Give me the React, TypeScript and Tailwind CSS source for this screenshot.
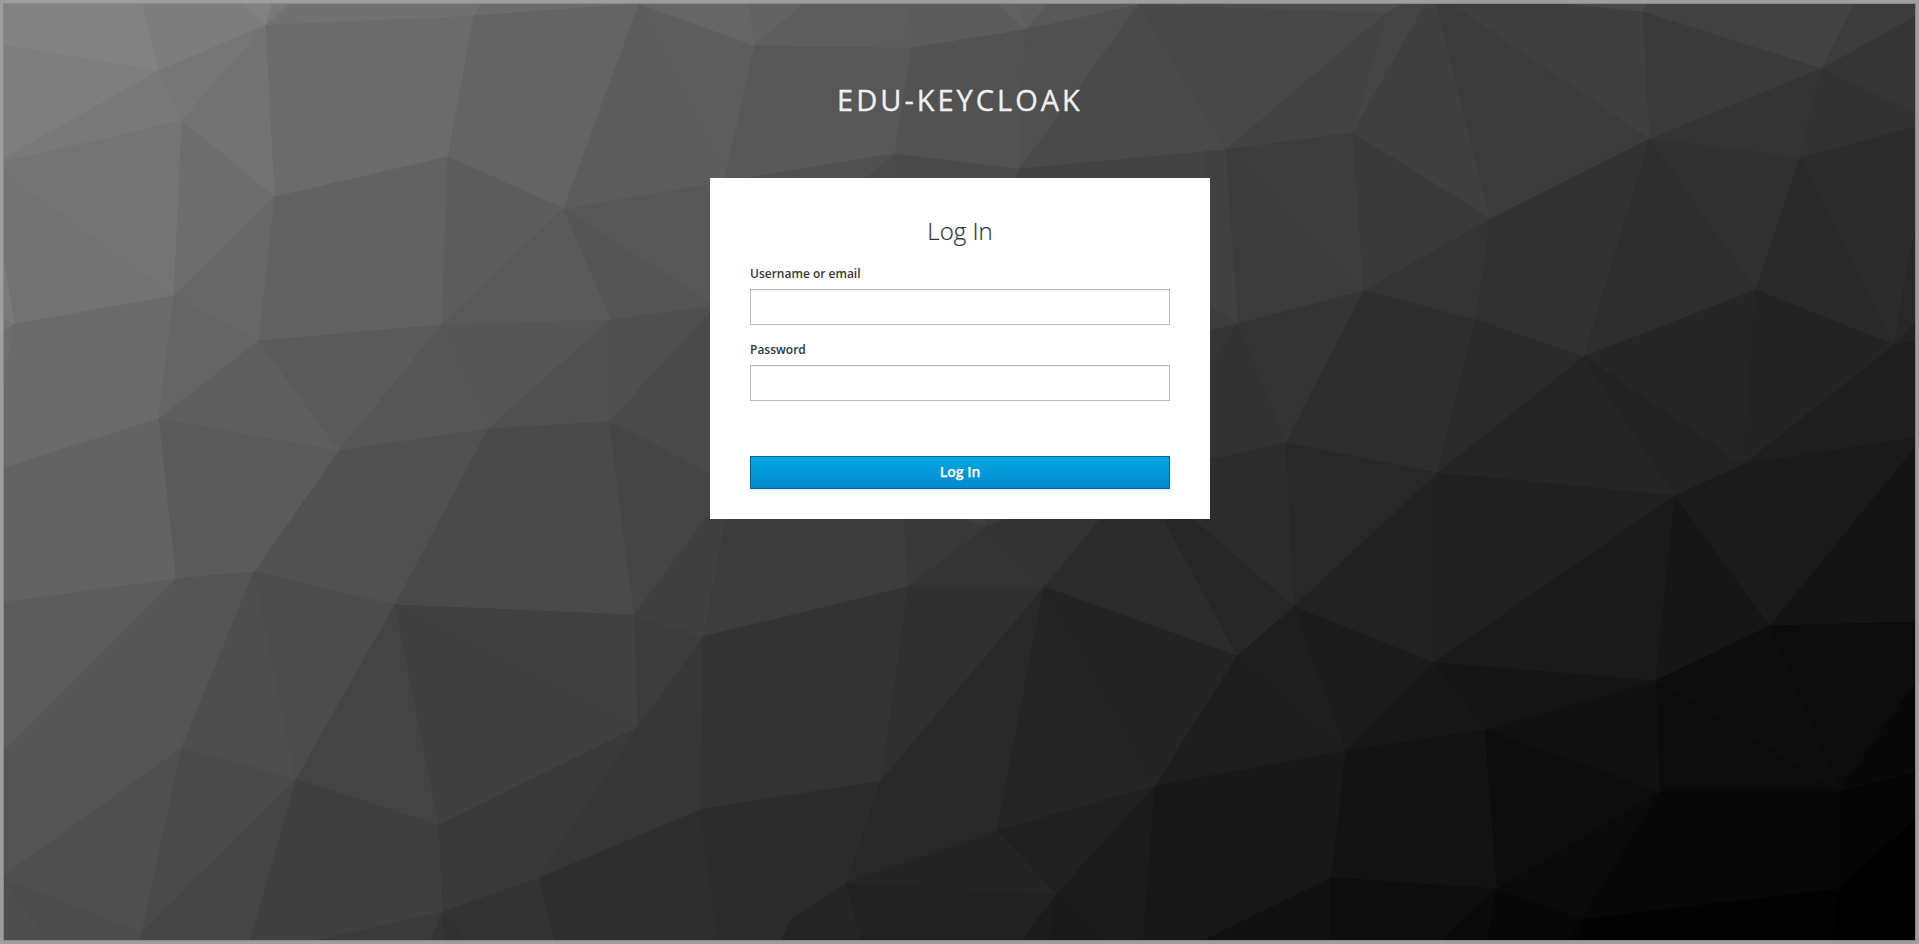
type Facet = [string, string];

// Low-poly backdrop: each facet is [points, fill].
const FACETS: Facet[] = [
  ["0,0 142,0 158,70 0,44", "#828282"],
  ["141,0 237,0 265,24 158,70", "#7d7d7d"],
  ["237,0 272,0 265,24", "#818181"],
  ["272,0 293,0 265,24", "#797979"],
  ["0,44 158,70 -8,164", "#7e7e7e"],
  ["158,70 181,120 -8,164", "#797979"],
  ["158,70 265,24 181,120", "#767676"],
  ["265,24 181,120 274,196", "#727272"],
  ["265,24 274,196 447,156 473,15", "#6b6b6b"],
  ["265,24 293,0 481,0 473,15", "#717171"],
  ["473,15 481,0 640,0 638,3", "#6c6c6c"],
  ["473,15 638,3 563,208 447,156", "#646464"],
  ["-8,164 181,120 173,295", "#747474"],
  ["-8,164 173,295 14,323 0,240", "#727272"],
  ["181,120 274,196 173,295", "#6d6d6d"],
  ["274,196 173,295 258,340", "#676767"],
  ["274,196 447,156 441,324 258,340", "#626262"],
  ["447,156 563,208 441,324", "#5d5d5d"],
  ["-4,220 14,323 -4,315", "#7a7a7a"],
  ["-4,315 14,323 -4,336", "#747474"],
  ["-4,336 14,323 0,400", "#6d6d6d"],
  ["14,323 173,295 158,418 0,468 0,400", "#6a6a6a"],
  ["173,295 258,340 158,418", "#656565"],
  ["258,340 158,418 338,450", "#5f5f5f"],
  ["258,340 441,324 338,450", "#5b5b5b"],
  ["441,324 487,428 338,450", "#565656"],
  ["441,324 610,319 487,428", "#555555"],
  ["441,324 563,208 610,319", "#595959"],
  ["563,208 610,319 715,305", "#545454"],
  ["563,208 723,181 760,330 715,305", "#575757"],
  ["638,3 563,208 723,181", "#5d5d5d"],
  ["638,3 754,45 723,181", "#5e5e5e"],
  ["754,45 894,153 723,181", "#585858"],
  ["754,45 911,47 894,153", "#575757"],
  ["723,181 894,153 860,182", "#505050"],
  ["894,153 860,182 900,190", "#4b4b4b"],
  ["894,153 898,182 1010,190 1019,168", "#494949"],
  ["638,3 640,0 748,0 754,45", "#666666"],
  ["748,0 806,0 754,45", "#636363"],
  ["754,45 806,0 909,0 911,47", "#5e5e5e"],
  ["909,0 993,0 1024,29 911,47", "#5c5c5c"],
  ["993,0 1017,0 1024,29", "#626262"],
  ["1017,0 1051,0 1024,29", "#5f5f5f"],
  ["1024,29 1051,0 1142,0 1138,4", "#585858"],
  ["911,47 1024,29 1019,168 894,153", "#525252"],
  ["1024,29 1138,4 1019,168", "#505050"],
  ["1138,4 1225,149 1019,168", "#4a4a4a"],
  ["1019,168 1225,149 1215,220 1010,190", "#434343"],
  ["1138,4 1386,12 1225,149", "#484848"],
  ["1138,4 1142,0 1410,0 1386,12", "#4d4d4d"],
  ["1386,12 1352,132 1225,149", "#434343"],
  ["1386,12 1432,-10 1352,132", "#454545"],
  ["1432,-10 1352,132 1490,218", "#404040"],
  ["1432,-10 1490,218 1649,138", "#3b3b3b"],
  ["1432,-10 1642,11 1649,138", "#3f3f3f"],
  ["1550,0 1648,0 1642,11", "#494949"],
  ["1642,11 1648,0 1855,0 1821,68", "#424242"],
  ["1642,11 1821,68 1649,138", "#3a3a3a"],
  ["1855,0 1919,0 1919,13 1821,68", "#3c3c3c"],
  ["1821,68 1919,13 1919,115", "#353535"],
  ["1821,68 1919,115 1919,125 1799,157", "#323232"],
  ["1821,68 1799,157 1649,138", "#343434"],
  ["1225,149 1352,132 1363,290", "#3d3d3d"],
  ["1225,149 1363,290 1237,323", "#3b3b3b"],
  ["1225,149 1237,323 1205,303 1205,150", "#414141"],
  ["1205,303 1237,323 1205,331", "#3c3c3c"],
  ["1205,331 1237,323 1205,374", "#353535"],
  ["1205,374 1237,323 1285,442 1205,460", "#323232"],
  ["1237,323 1363,290 1285,442", "#343434"],
  ["1352,132 1490,218 1363,290", "#393939"],
  ["1490,218 1363,290 1475,319", "#343434"],
  ["1490,218 1475,319 1583,356", "#313131"],
  ["1490,218 1649,138 1583,356", "#323232"],
  ["1649,138 1583,356 1755,289", "#2e2e2e"],
  ["1649,138 1799,157 1755,289", "#313131"],
  ["1799,157 1755,289 1893,344", "#2a2a2a"],
  ["1799,157 1919,125 1919,200 1893,344", "#2c2c2c"],
  ["1919,200 1919,316 1893,344", "#282828"],
  ["1919,316 1919,340 1893,344", "#232323"],
  ["1919,340 1919,412 1893,344", "#1f1f1f"],
  ["1893,344 1919,412 1919,436 1742,464", "#1e1e1e"],
  ["1755,289 1893,344 1742,464", "#242424"],
  ["1755,289 1742,464 1583,356", "#262626"],
  ["1363,290 1475,319 1437,472 1285,442", "#2e2e2e"],
  ["1475,319 1583,356 1437,472", "#2b2b2b"],
  ["1583,356 1437,472 1674,495", "#252525"],
  ["1583,356 1742,464 1674,495", "#222222"],
  ["1285,442 1437,472 1293,606", "#282828"],
  ["1205,460 1285,442 1293,606 1183,513 1205,500", "#2c2c2c"],
  ["1437,472 1293,606 1433,662", "#212121"],
  ["1437,472 1674,495 1433,662", "#202020"],
  ["1674,495 1433,662 1655,680", "#1a1a1a"],
  ["1674,495 1769,625 1655,680", "#161616"],
  ["1674,495 1742,464 1769,625", "#1b1b1b"],
  ["1742,464 1919,436 1919,441 1769,625", "#1a1a1a"],
  ["1919,441 1769,625 1919,621", "#141414"],
  ["1769,625 1919,621 1919,675 1839,791", "#0c0c0c"],
  ["1769,625 1839,791 1655,680", "#0e0e0e"],
  ["1655,680 1839,791 1659,791", "#0c0c0c"],
  ["1839,791 1919,675 1919,771", "#080808"],
  ["1839,791 1919,771 1919,814 1839,888", "#040404"],
  ["1839,888 1919,814 1919,944 1831,944", "#000000"],
  ["1659,791 1839,791 1839,888", "#060606"],
  ["1659,791 1839,888 1580,919", "#070707"],
  ["1580,919 1839,888 1831,944 1582,944", "#020202"],
  ["1580,919 1582,944 1566,944", "#040404"],
  ["1659,791 1496,888 1580,919", "#0a0a0a"],
  ["1484,729 1659,791 1496,888", "#0d0d0d"],
  ["1484,729 1655,680 1659,791", "#111111"],
  ["1433,662 1655,680 1484,729", "#151515"],
  ["1433,662 1484,729 1345,750", "#171717"],
  ["1293,606 1433,662 1345,750", "#1b1b1b"],
  ["1345,750 1484,729 1496,888 1330,877", "#131313"],
  ["1496,888 1580,919 1566,944 1486,944", "#070707"],
  ["1496,888 1486,944 1434,944", "#0a0a0a"],
  ["1330,877 1496,888 1434,944 1330,944", "#0e0e0e"],
  ["1330,877 1330,944 1193,944", "#111111"],
  ["1154,785 1330,877 1193,944 1142,944", "#171717"],
  ["1154,785 1345,750 1330,877", "#181818"],
  ["1236,655 1345,750 1154,785", "#1d1d1d"],
  ["1236,655 1293,606 1345,750", "#1e1e1e"],
  ["1155,510 1183,510 1293,606 1236,655", "#272727"],
  ["1043,586 1106,510 1158,510 1236,655", "#2c2c2c"],
  ["1043,586 1236,655 1154,785", "#242424"],
  ["1043,586 1154,785 996,830", "#252525"],
  ["1043,586 996,830 880,780", "#292929"],
  ["907,586 1043,586 880,780", "#303030"],
  ["985,526 1028,508 1107,508 1043,586", "#333333"],
  ["985,526 1043,586 907,586", "#343434"],
  ["903,510 940,510 985,526 907,586", "#383838"],
  ["940,510 987,510 985,526", "#3e3e3e"],
  ["987,510 1025,510 985,526", "#3a3a3a"],
  ["725,510 903,510 907,586 702,636", "#3c3c3c"],
  ["702,636 907,586 880,780 699,809", "#333333"],
  ["996,830 1154,785 1056,893", "#202020"],
  ["1154,785 1142,944 1106,944 1056,893", "#1b1b1b"],
  ["1056,893 1106,944 1048,944", "#191919"],
  ["1056,893 1048,944 1017,944", "#1b1b1b"],
  ["845,883 1056,893 1017,944 862,944", "#212121"],
  ["996,830 1056,893 845,883", "#242424"],
  ["880,780 996,830 845,883", "#282828"],
  ["845,883 862,944 778,944 791,917", "#252525"],
  ["699,809 880,780 845,883 791,917 778,944 718,944", "#2c2c2c"],
  ["538,877 699,809 718,944 555,944", "#2e2e2e"],
  ["441,911 538,877 555,944 470,944", "#333333"],
  ["441,911 470,944 444,944", "#313131"],
  ["441,911 444,944 428,944", "#343434"],
  ["441,911 428,944 295,944", "#3a3a3a"],
  ["438,824 637,726 538,877 441,911", "#393939"],
  ["637,726 699,809 538,877", "#363636"],
  ["637,726 702,636 699,809", "#373737"],
  ["633,614 702,636 637,726", "#3c3c3c"],
  ["633,614 712,507 727,507 702,636", "#404040"],
  ["608,421 712,471 712,508 633,614", "#454545"],
  ["608,421 715,303 715,475", "#4a4a4a"],
  ["610,319 715,305 608,421", "#4f4f4f"],
  ["487,428 610,319 608,421", "#505050"],
  ["487,428 608,421 633,614 394,604", "#4a4a4a"],
  ["338,450 487,428 394,604", "#505050"],
  ["338,450 394,604 253,571", "#515151"],
  ["158,418 338,450 253,571 175,578", "#5b5b5b"],
  ["0,468 158,418 175,578 0,602", "#636363"],
  ["0,602 175,578 0,753", "#5d5d5d"],
  ["175,578 181,747 0,757 0,753", "#555555"],
  ["175,578 253,571 181,747", "#545454"],
  ["253,571 181,747 295,779", "#4e4e4e"],
  ["253,571 394,604 295,779", "#4c4c4c"],
  ["394,604 438,824 295,779", "#444444"],
  ["394,604 637,726 438,824", "#404040"],
  ["394,604 633,614 637,726", "#414141"],
  ["0,757 181,747 0,877", "#545454"],
  ["0,877 181,747 141,932", "#4f4f4f"],
  ["0,877 141,932 140,944 0,944", "#4c4c4c"],
  ["0,877 50,944 0,944", "#4e4e4e"],
  ["181,747 295,779 141,932", "#4a4a4a"],
  ["141,932 295,779 248,944 140,944", "#464646"],
  ["295,779 438,824 441,911", "#3f3f3f"],
  ["295,779 441,911 295,944 248,944", "#404040"],
];

function Backdrop() {
  return (
    <svg
      className="absolute inset-0 h-full w-full"
      viewBox="-0.8 -0.7 1919 944"
      preserveAspectRatio="none"
      aria-hidden="true"
    >
      {/* Stroked underlay closes the hairline seams between neighbouring facets. */}
      <g strokeWidth={2} strokeLinejoin="round">
        {FACETS.map(([points, fill]) => (
          <polygon key={points} points={points} fill={fill} stroke={fill} />
        ))}
      </g>
      <g>
        {FACETS.map(([points, fill]) => (
          <polygon key={points} points={points} fill={fill} />
        ))}
      </g>
    </svg>
  );
}

function Field({ id, label, type }: { id: string; label: string; type: string }) {
  return (
    <div className="flex flex-col">
      <label htmlFor={id} className="h-5 pl-[0.5px] text-xs leading-5 font-semibold">
        {label}
      </label>
      <input
        id={id}
        type={type}
        className="mt-[5px] h-9 w-full border border-[#bbb] bg-white px-1.5 text-sm shadow-[inset_0_1px_1px_rgba(3,3,3,0.075)] outline-none"
      />
    </div>
  );
}

export default function App() {
  return (
    <div className="relative h-[944px] w-full overflow-hidden bg-[#333] font-['Open_Sans',sans-serif] text-[#363636]">
      <Backdrop />
      <div className="pointer-events-none absolute inset-0 border-[3px] border-[#9e9e9e]" />
      <div className="pointer-events-none absolute inset-[3px] border border-[#888]" />
      <main className="relative flex flex-col items-center pt-20">
        <h1 className="pl-px text-[29px] leading-10 tracking-[3px] text-[#f0f0f0] uppercase [-webkit-text-stroke:0.35px_#f0f0f0]">
          edu-keycloak
        </h1>
        <section className="mt-[58px] h-[341px] w-[500px] bg-white px-10 pt-[37px]">
          <h2 className="pl-px text-center text-2xl leading-8 font-light [-webkit-text-stroke:0.2px_#363636]">Log In</h2>
          <form className="mt-[17px] flex flex-col gap-[15px]" onSubmit={(e) => e.preventDefault()}>
            <Field id="username" label="Username or email" type="text" />
            <Field id="password" label="Password" type="password" />
            <button
              type="submit"
              className="mt-10 h-[33px] w-full border border-[#00659c] bg-linear-to-b from-[#00a8e1] to-[#0088ce] pb-[2px] pl-px text-sm leading-none font-semibold text-white shadow-[0_2px_3px_rgba(3,3,3,0.1)] [-webkit-text-stroke:0.25px_#fff]"
            >
              Log In
            </button>
          </form>
        </section>
      </main>
    </div>
  );
}
